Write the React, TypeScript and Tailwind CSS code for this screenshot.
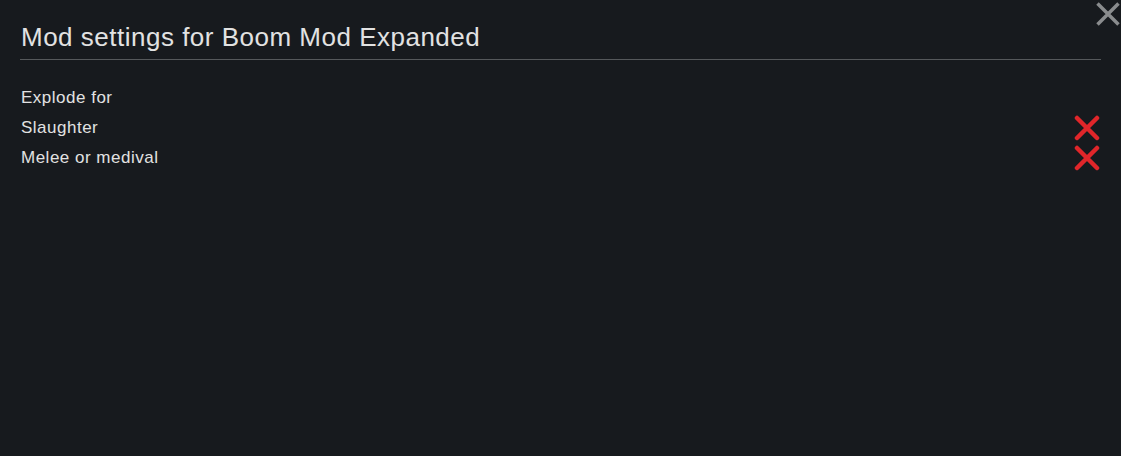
const settings = [
  { label: 'Explode for', enabled: null },
  { label: 'Slaughter', enabled: false },
  { label: 'Melee or medival', enabled: false }
]

function RedCross() {
  return (
    <svg width="26" height="26" viewBox="0 0 26 26" className="shrink-0">
      <path d="M3 3 L23 23 M23 3 L3 23" stroke="#e0262a" strokeWidth="4.5" strokeLinecap="round" />
    </svg>
  )
}

export default function App() {
  return (
    <div
      className="relative h-[456px] w-[1121px] overflow-hidden bg-[#171a1e] text-[#e2e2e2]"
      style={{ fontFamily: '"Liberation Sans", Arial, sans-serif' }}>
      <button className="absolute right-[1px] top-[2px] text-[#8a8c8e]">
        <svg width="24" height="24" viewBox="0 0 24 24">
          <path d="M1.5 1.5 L22.5 22.5 M22.5 1.5 L1.5 22.5" stroke="currentColor" strokeWidth="3.5" />
        </svg>
      </button>
      <div className="px-[20px] pt-[22px]">
        <h1 className="border-b border-[#55585b] pb-[6px] pl-[1px] text-[26px] leading-[31px] tracking-[0.5px]">
          Mod settings for Boom Mod Expanded
        </h1>
        <div className="mt-[23px] flex flex-col">
          {settings.map(setting => (
            <div key={setting.label} className="flex h-[30px] items-center justify-between pl-[1px] pr-[1px]">
              <span className="text-[17px] tracking-[0.5px]">{setting.label}</span>
              {setting.enabled === false && <RedCross />}
            </div>
          ))}
        </div>
      </div>
    </div>
  )
}
